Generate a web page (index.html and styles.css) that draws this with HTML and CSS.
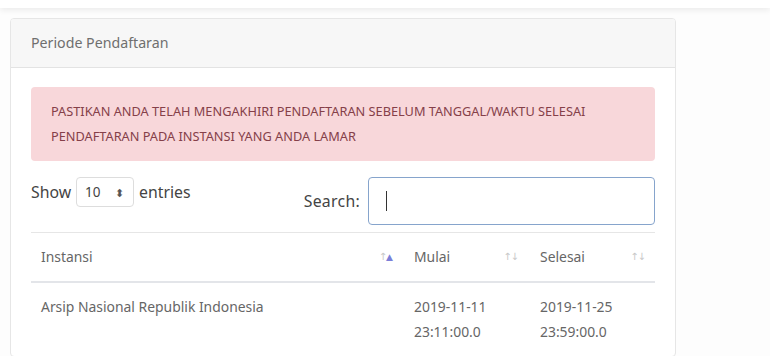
FILE: index.html
```html
<!DOCTYPE html>
<html lang="en">
<head>
    <meta charset="UTF-8">
    <meta name="viewport" content="width=device-width, initial-scale=1.0">
    <title>Periode Pendaftaran</title>
    <link rel="stylesheet" href="styles.css">
</head>
<body>
    <div class="topbar"></div>
    <div class="main">
        <div class="card">
            <div class="card-header">Periode Pendaftaran</div>
            <div class="card-body">
                <div class="alert">PASTIKAN ANDA TELAH MENGAKHIRI PENDAFTARAN SEBELUM TANGGAL/WAKTU SELESAI PENDAFTARAN PADA INSTANSI YANG ANDA LAMAR</div>
                <div class="controls">
                    <div class="length">
                        Show
                        <span class="select">10 <span class="caret">&#x2B0D;</span></span>
                        entries
                    </div>
                    <div class="search">
                        Search:
                        <span class="input"><span class="cursor"></span></span>
                    </div>
                </div>
                <table class="table">
                    <thead>
                        <tr>
                            <th class="col-instansi">Instansi <span class="sort"><span>&#x2191;</span><span class="on">&#x25B2;</span></span></th>
                            <th class="col-mulai">Mulai <span class="sort"><span>&#x2191;</span><span>&#x2193;</span></span></th>
                            <th class="col-selesai">Selesai <span class="sort"><span>&#x2191;</span><span>&#x2193;</span></span></th>
                        </tr>
                    </thead>
                    <tbody>
                        <tr>
                            <td>Arsip Nasional Republik Indonesia</td>
                            <td>2019-11-11<br>23:11:00.0</td>
                            <td>2019-11-25<br>23:59:00.0</td>
                        </tr>
                    </tbody>
                </table>
            </div>
        </div>
    </div>
</body>
</html>
```

FILE: styles.css
```css
body {
    margin: 0;
    font-family: "Noto Sans", sans-serif;
    color: #666;
    background: #fdfdfd;
}
.topbar {
    height: 8px;
    background: #fff;
    box-shadow: 0 2px 6px rgba(0,0,0,0.08);
}
.main {
    padding: 10px 94px 0 10px;
}
.card {
    border: 1px solid #e6e6e6;
    border-radius: 4px;
    background: #fff;
    overflow: hidden;
}
.card-header {
    background: #f7f7f7;
    border-bottom: 1px solid #e3e3e3;
    height: 48px;
    line-height: 47px;
    padding: 0 20px;
    font-size: 14.2px;
    color: #6f6f6f;
}
.card-body {
    padding: 19px 20px 0;
}
.alert {
    background: #f8d7da;
    border-radius: 4px;
    padding: 12px 20px;
    line-height: 25px;
    font-size: 12.75px;
    color: #854049;
}
.controls {
    display: flex;
    justify-content: space-between;
    margin-top: 16px;
    font-size: 15.8px;
    color: #444;
}
.length {
    display: flex;
    align-items: center;
    gap: 5px;
    height: 30px;
}
.select {
    display: inline-flex;
    align-items: center;
    justify-content: space-between;
    width: 58px;
    height: 30px;
    box-sizing: border-box;
    border: 1px solid #ddd;
    border-radius: 4px;
    padding: 0 9px 0 8px;
    font-size: 13.5px;
}
.caret {
    font-size: 11px;
    color: #555;
}
.search {
    display: flex;
    align-items: center;
    gap: 8px;
    letter-spacing: 0.3px;
}
.input {
    display: flex;
    align-items: center;
    width: 287px;
    height: 48px;
    box-sizing: border-box;
    border: 1px solid #86a4cc;
    border-radius: 4px;
    padding-left: 17px;
}
.cursor {
    width: 1px;
    height: 20px;
    background: #333;
}
.table {
    width: 100%;
    table-layout: fixed;
    margin-top: 7px;
    border-collapse: collapse;
    font-size: 13.9px;
    color: #666;
}
.table th {
    box-sizing: border-box;
    font-weight: normal;
    text-align: left;
    border-top: 1px solid #e6e6e6;
    border-bottom: 2px solid #e3e5e9;
    height: 49px;
    padding: 0 8px 0 12px;
    position: relative;
}
.table th.col-instansi {
    padding-left: 10px;
}
.table td {
    padding: 11px 12px 12px;
    line-height: 25px;
    vertical-align: top;
}
.table td:first-child {
    padding-left: 10px;
}
.col-instansi {
    width: 371px;
}
.col-mulai {
    width: 126px;
}
.sort {
    position: absolute;
    right: 10px;
    top: 18px;
    font-family: "DejaVu Sans", sans-serif;
    font-size: 10px;
    color: #c8c8c8;
    letter-spacing: -1px;
}
.sort .on {
    color: #7b7fd8;
    font-size: 9px;
}
```
